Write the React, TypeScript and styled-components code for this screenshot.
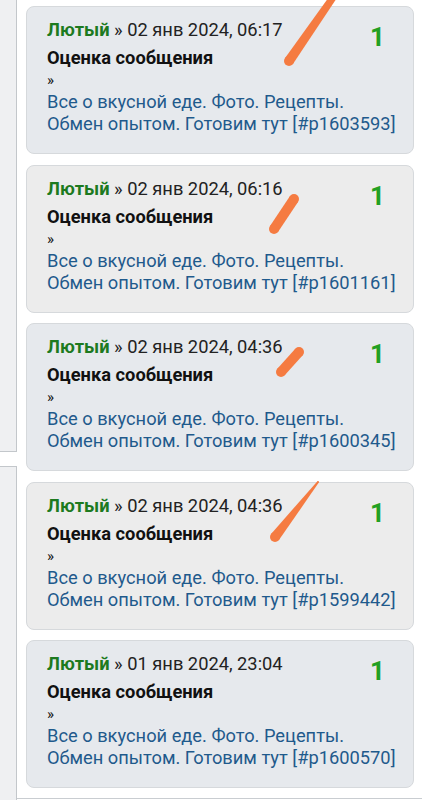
import styled, {createGlobalStyle} from "styled-components";

const GlobalStyle = createGlobalStyle`
    html, body {
        margin: 0;
        padding: 0;
        background: #ffffff;
    }
    body {
        font-family: Roboto, "Noto Sans", "Liberation Sans", sans-serif;
    }
`

const PageWrapper = styled.div`
    position: relative;
    display: flex;
    width: 432px;
    height: 800px;
    overflow: hidden;
`

const Sidebar = styled.div`
    width: 17px;
    display: flex;
    flex-direction: column;
    gap: 14px;
`

const SideBlock = styled.div<{ $top?: boolean }>`
    background: #eff0f2;
    border-right: 1px solid #c3c7cb;
    ${({$top}) => $top
        ? "height: 451px; border-bottom: 1px solid #c3c7cb;"
        : "flex: 1; border-top: 1px solid #c3c7cb;"}
`

const MainColumn = styled.div`
    width: 388px;
    padding: 6px 8px 10px 9px;
    border-bottom: 1px solid #c9cdd1;
    display: flex;
    flex-direction: column;
    gap: 10.5px;
    align-self: flex-start;
`

const CardWrapper = styled.div<{ $alt?: boolean }>`
    background: ${({$alt}) => ($alt ? "#ececec" : "#e6e9ed")};
    border: 1px solid #d6d9dc;
    border-radius: 8px;
    padding: 12px 4px 18px 20px;
    height: 148px;
    box-sizing: border-box;
`

const HeaderRow = styled.div`
    display: flex;
    justify-content: space-between;
    align-items: flex-start;
    height: 22px;
    font-size: 18.3px;
    line-height: 22px;
    color: #222222;
`

const Author = styled.span`
    color: #1d7a1f;
    font-weight: 700;
`

const Score = styled.span`
    color: #22a022;
    font-weight: 700;
    font-size: 26px;
    line-height: 26px;
    margin-top: 5px;
    margin-right: 24px;
`

const Title = styled.div`
    margin-top: 6px;
    font-size: 18.3px;
    line-height: 22px;
    font-weight: 700;
    color: #111111;
`

const Arrow = styled.div`
    font-size: 15px;
    line-height: 22px;
    color: #111111;
`

const TopicLink = styled.div`
    font-size: 18.3px;
    line-height: 22px;
    color: #1f5a8c;
    white-space: nowrap;
`

const Overlay = styled.svg`
    position: absolute;
    left: 0;
    top: 0;
    pointer-events: none;
`

type Post = { date: string; id: string; alt?: boolean }

const posts: Post[] = [
    {date: "02 янв 2024, 06:17", id: "1603593"},
    {date: "02 янв 2024, 06:16", id: "1601161", alt: true},
    {date: "02 янв 2024, 04:36", id: "1600345"},
    {date: "02 янв 2024, 04:36", id: "1599442", alt: true},
    {date: "01 янв 2024, 23:04", id: "1600570"},
]

// hand drawn marks: [x1, y1, w1, x2, y2, w2]
const marks: number[][] = [
    [334, -4, 7, 289, 61, 10],
    [294, 199, 10, 274, 229, 10],
    [299, 352, 10, 281, 372, 10],
    [318, 482, 2, 275, 537, 10],
]

function Brush({m}: { m: number[] }) {
    const [x1, y1, w1, x2, y2, w2] = m
    const len = Math.hypot(x2 - x1, y2 - y1)
    const nx = -(y2 - y1) / len
    const ny = (x2 - x1) / len
    const a = w1 / 2
    const b = w2 / 2
    const pts = [
        [x1 + nx * a, y1 + ny * a],
        [x2 + nx * b, y2 + ny * b],
        [x2 - nx * b, y2 - ny * b],
        [x1 - nx * a, y1 - ny * a],
    ].map((p) => p.join(",")).join(" ")
    return (
        <g fill="#f57b41">
            <polygon points={pts}/>
            <circle cx={x1} cy={y1} r={a}/>
            <circle cx={x2} cy={y2} r={b}/>
        </g>
    )
}

function PostCard({post}: { post: Post }) {
    return (
        <CardWrapper $alt={post.alt}>
            <HeaderRow>
                <span><Author>Лютый</Author> » {post.date}</span>
                <Score>1</Score>
            </HeaderRow>
            <Title>Оценка сообщения</Title>
            <Arrow>»</Arrow>
            <TopicLink>Все о вкусной еде. Фото. Рецепты.</TopicLink>
            <TopicLink>Обмен опытом. Готовим тут [#p{post.id}]</TopicLink>
        </CardWrapper>
    )
}

function App() {
    return (
        <>
            <GlobalStyle/>
            <PageWrapper>
                <Sidebar>
                    <SideBlock $top/>
                    <SideBlock/>
                </Sidebar>
                <MainColumn>
                    {posts.map((p) => <PostCard key={p.id} post={p}/>)}
                </MainColumn>
                <Overlay width={432} height={800} viewBox="0 0 432 800">
                    {marks.map((m, i) => <Brush key={i} m={m}/>)}
                </Overlay>
            </PageWrapper>
        </>
    )
}

export default App;
